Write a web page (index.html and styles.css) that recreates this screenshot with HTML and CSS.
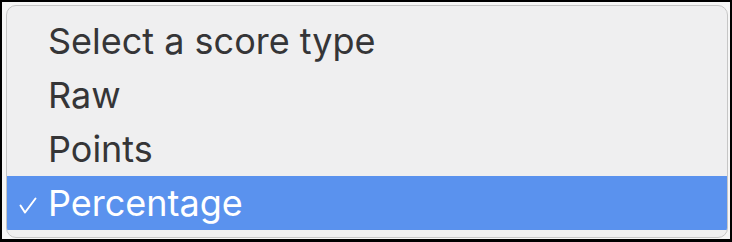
FILE: index.html
```html
<!DOCTYPE html>
<html>
<head>
<meta charset="utf-8">
<link rel="stylesheet" href="styles.css">
</head>
<body>
<div class="screen">
  <ul class="menu">
    <li class="item"><span class="check"></span><span class="label">Select a score type</span></li>
    <li class="item"><span class="check"></span><span class="label">Raw</span></li>
    <li class="item"><span class="check"></span><span class="label">Points</span></li>
    <li class="item selected"><span class="check"><svg class="tick" width="18" height="17" viewBox="0 0 18 17"><polyline points="1.5,8.5 6,15.5 16.5,1.5" fill="none" stroke="currentColor" stroke-width="2" stroke-linecap="round" stroke-linejoin="round"/></svg></span><span class="label">Percentage</span></li>
  </ul>
</div>
</body>
</html>
```
FILE: styles.css
```css
html, body {
  margin: 0;
  height: 100%;
}
body {
  background: #000;
  padding: 2px 2px 3px 2px;
  box-sizing: border-box;
  font-family: Inter, "Noto Sans", sans-serif;
}
.screen {
  height: 100%;
  background: #f6f6f6;
  padding: 3px 2px 1px 4px;
  box-sizing: border-box;
}
.menu {
  list-style: none;
  margin: 0;
  height: 100%;
  box-sizing: border-box;
  padding: 8px 0 7px 0;
  border: 1px solid #c6c6c6;
  border-radius: 10px;
  background: #efeff0;
  overflow: hidden;
}
.item {
  height: 54px;
  display: flex;
  align-items: center;
  color: #353537;
  font-size: 36px;
  line-height: 1;
}
.check {
  width: 41px;
  padding-left: 12px;
  box-sizing: border-box;
  display: flex;
  align-items: center;
}
.tick {
  display: block;
  margin-top: 5px;
}
.selected {
  background: #5a92ee;
  color: #fff;
}
```
